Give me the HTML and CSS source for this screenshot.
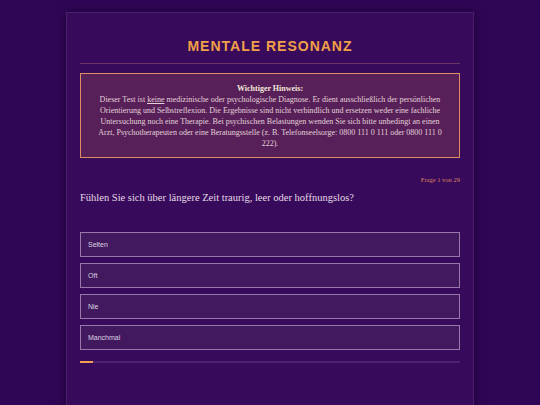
FILE: index.html
```html
<!DOCTYPE html>
<html lang="de">
<head>
<meta charset="utf-8">
<title>Mentale Resonanz</title>
<link rel="stylesheet" href="styles.css">
</head>
<body>
<main class="card">
  <h1 class="title">MENTALE RESONANZ</h1>
  <hr class="divider">
  <section class="notice">
    <strong class="notice-head">Wichtiger Hinweis:</strong>
    <p class="notice-text">Dieser Test ist <u>keine</u> medizinische oder psychologische Diagnose. Er dient ausschließlich der persönlichen Orientierung und Selbstreflexion. Die Ergebnisse sind nicht verbindlich und ersetzen weder eine fachliche Untersuchung noch eine Therapie. Bei psychischen Belastungen wenden Sie sich bitte unbedingt an einen Arzt, Psychotherapeuten oder eine Beratungsstelle (z. B. Telefonseelsorge: 0800 111 0 111 oder 0800 111 0 222).</p>
  </section>
  <div class="counter">Frage 1 von 29</div>
  <h2 class="question">Fühlen Sie sich über längere Zeit traurig, leer oder hoffnungslos?</h2>
  <div class="options">
    <button class="option">Selten</button>
    <button class="option">Oft</button>
    <button class="option">Nie</button>
    <button class="option">Manchmal</button>
  </div>
  <div class="progress"><div class="progress-fill" style="width:3.45%"></div></div>
</main>
</body>
</html>
```
FILE: styles.css
```css
html, body {
  margin: 0;
  padding: 0;
  background: #2f0655;
  height: 100%;
  overflow: hidden;
}
.card {
  width: 380px;
  margin: 12px auto 0;
  padding: 25px 13px 40px;
  background: #380a5b;
  border: 1px solid #4a1e6c;
  box-shadow: 0 0 10px rgba(20, 0, 40, 0.6);
  min-height: 340px;
}
.title {
  margin: 0;
  text-align: center;
  font-family: "Liberation Sans", Arial, sans-serif;
  font-weight: 700;
  font-size: 14px;
  line-height: 16px;
  letter-spacing: 1px;
  color: #f0a048;
}
.divider {
  margin: 9px 0 9px;
  border: 0;
  height: 1px;
  background: #6a3462;
}
.notice {
  background: #582059;
  border: 1px solid #de8e5e;
  padding: 9px 14px 8px;
  text-align: center;
  font-family: "Liberation Serif", "Times New Roman", serif;
  font-size: 8px;
  line-height: 11px;
  color: #e2d2d8;
}
.notice-head {
  display: block;
  font-weight: 700;
  color: #f1e6d8;
}
.notice-text {
  margin: 0;
}
.counter {
  margin-top: 18px;
  text-align: right;
  font-family: "Liberation Serif", "Times New Roman", serif;
  font-size: 6.5px;
  line-height: 8px;
  color: #d8845c;
}
.question {
  margin: 7px 0 0;
  font-family: "Liberation Serif", "Times New Roman", serif;
  font-weight: 400;
  font-size: 10.5px;
  line-height: 14px;
  color: #e6dbe6;
}
.options {
  margin-top: 27px;
  display: flex;
  flex-direction: column;
  gap: 6px;
}
.option {
  display: block;
  width: 100%;
  height: 25px;
  margin: 0;
  padding: 0 7px;
  text-align: left;
  background: #42195f;
  border: 1px solid #9878a8;
  border-radius: 0;
  font-family: "Liberation Sans", Arial, sans-serif;
  font-size: 7px;
  color: #ddd4e2;
}
.progress {
  margin-top: 11px;
  height: 2px;
  background: #4e2272;
}
.progress-fill {
  height: 100%;
  background: #f0a050;
}
```
